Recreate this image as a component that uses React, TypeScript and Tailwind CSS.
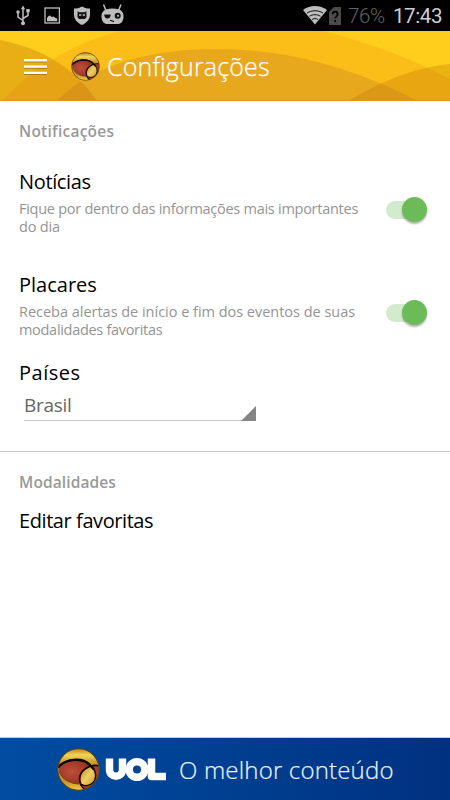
type SwitchRowProps = {
  title: string
  titleClass?: string
  children: React.ReactNode
}

function StatusBar() {
  return (
    <div className="flex h-[31px] items-center bg-black">
      {/* Left icons */}
      <svg width="150" height="31" viewBox="0 0 150 31" fill="none">
        {/* USB */}
        <g stroke="#bdbdbd" strokeWidth="1.500">
          <path d="M23 8v15M23 20.500l-5-3.500v-4.500M23 18.500l5-3v-4" />
          <circle cx="23" cy="23.200" r="2" fill="#bdbdbd" stroke="none" />
          <path d="M23 5.500l2.200 3.700h-4.400z" fill="#bdbdbd" stroke="none" />
          <circle cx="18" cy="12" r="1.700" fill="#bdbdbd" stroke="none" />
          <rect x="26.300" y="9" width="3.400" height="3.400" fill="#bdbdbd" stroke="none" />
        </g>
        {/* Picture */}
        <rect x="45" y="8" width="14.400" height="15" stroke="#bdbdbd" strokeWidth="1.300" />
        <path d="M47 21.300v-3.300l1.500-2 1.500-.5 1 1 1 .5 1.500-.5 2 1.500 1.700.5v2.800z" fill="#bdbdbd" />
        {/* Shield */}
        <path d="M82 6.500c3 1.800 5 2 8 2v6c0 5-3.500 8.500-8 10.500-4.500-2-8-5.500-8-10.500v-6c3 0 5-.2 8-2z" fill="#bdbdbd" />
        <path d="M77.700 11l1.500 1.300h5.600l1.500-1.300.3 6-1.600 2h-6l-1.600-2z" fill="#111" />
        <path d="M79 15h2.300M82.700 15H85" stroke="#bdbdbd" strokeWidth="1.500" />
        {/* Droid head */}
        <path d="M103.500 4.500l2.500 6M121 4.500l-2.500 6" stroke="#bdbdbd" strokeWidth="1.500" />
        <path d="M106 9.500c4-1.300 9-1.300 13 0 3.500 1.400 4.500 4 4.500 7 0 5-2.500 7.500-6 7.500h-10c-3.500 0-6-2.500-6-7.500 0-3 1-5.600 4.500-7z" fill="#bdbdbd" />
        <path d="M104.200 14.500h6.500c0 2.800-1.400 4-3.200 4s-3.300-1.300-3.300-4z" fill="#111" />
        <circle cx="117.700" cy="15.800" r="3" fill="#111" />
        <circle cx="118" cy="15.800" r="1.100" fill="#bdbdbd" />
        <path d="M110 20.300l4 1.300" stroke="#111" strokeWidth="1.200" />
      </svg>

      {/* Right icons */}
      <svg className="ml-[150px]" width="43" height="31" viewBox="0 0 43 31" fill="none">
        <path d="M3 10c7-5.500 17-5.500 24 0L15 24.500z" fill="#bdbdbd" />
        <path d="M7 13c5-3 11-3 16 0M9.500 16.200c3.500-2 7.500-2 11 0M12 19.500c2-1.200 4-1.200 6 0" stroke="#111" strokeWidth="1" />
        <path d="M34 7h7v18H29V12z" fill="#4b4b4b" />
        <path d="M32.700 14.300c0-3.500 5-3.500 5 0 0 2-2.500 2-2.500 4.300M35.200 20v2" stroke="#000" strokeWidth="1.700" />
      </svg>
      <span className="mt-px ml-[5px] w-[39px] font-[Roboto,sans-serif] text-[20.500px] leading-none font-light tracking-[-0.4px] whitespace-nowrap text-[#626262]">
        76%
      </span>
      <span className="mt-px ml-[6px] font-[Roboto,sans-serif] text-[20.500px] leading-none tracking-[-0.4px] text-[#cfcfcf]">
        17:43
      </span>
    </div>
  )
}

function Ball({ size, id }: { size: number; id: string }) {
  return (
    <svg width={size} height={size} viewBox="0 0 42 42" fill="none" className="shrink-0">
      <defs>
        <linearGradient id={id + "gold"} x1="0" y1="0" x2="0" y2="1">
          <stop offset="0" stopColor="#b88420" />
          <stop offset=".15" stopColor="#f2d658" />
          <stop offset=".35" stopColor="#c9952d" />
          <stop offset=".8" stopColor="#c9962f" />
          <stop offset="1" stopColor="#f4cc45" />
        </linearGradient>
        <linearGradient id={id + "patch"} x1="0" y1="0" x2="1" y2="1">
          <stop offset="0" stopColor="#b5822d" />
          <stop offset=".5" stopColor="#f0cf62" />
          <stop offset="1" stopColor="#c8932f" />
        </linearGradient>
        <radialGradient id={id + "red"} cx=".4" cy=".5" r=".7">
          <stop offset="0" stopColor="#bf4f39" />
          <stop offset="1" stopColor="#8d2a1b" />
        </radialGradient>
        <clipPath id={id + "clip"}>
          <circle cx="21" cy="21" r="20" />
        </clipPath>
      </defs>
      <circle cx="21" cy="21" r="20.300" fill={"url(#" + id + "gold)"} />
      <g clipPath={"url(#" + id + "clip)"}>
        <path d="M2 18C9 9 25 9 33 18L28 34C17 37 6 33 2 22z" fill={"url(#" + id + "red)"} />
        <path d="M42 18C31 16 22 24 23 31C23 36 26 40 30 42H42z" fill="#a83c26" />
        <path d="M33 18C39 22 39 30 35 34C32 36.500 28 37 24.500 35.500C21 30 24 20 33 18z" fill={"url(#" + id + "patch)"} />
        <path d="M1 19C8 10 25 9 32 16.500C39 22 39 30 35 34C31.500 37.500 27 37 23.500 35.500" stroke="#080503" strokeWidth="1.300" />
        <path d="M1 19C8 10 25 9 32 16.500L36 21" stroke="#080503" strokeWidth="2.200" />
        <path d="M42 17.500C31 15 21.500 23 22 31C22.500 36 25 40 30 42" stroke="#080503" strokeWidth="1.500" />
        <path d="M2 23C6 32 15 35.500 23 35" stroke="#7a4415" strokeWidth="1" />
      </g>
      <circle cx="21" cy="21" r="20.200" stroke="#594019" strokeWidth="1" />
    </svg>
  )
}

function Header() {
  return (
    <header className="relative h-[70px] overflow-hidden bg-[#ffcd1b]">
      {/* Overlapping discs */}
      <svg className="absolute inset-0" width="450" height="70" viewBox="0 0 450 70">
        <path d="M2 70C30 39 68 14 120 0H323C370 12 412 28 450 48V70z" fill="#fbbd17" />
        <path d="M57 70C95 30 160 18 215 18C290 18 355 38 418 70z" fill="#e8a81e" />
        <path d="M0 9C45 18 75 38 97 70H0z" fill="#be730f" fillOpacity=".34" />
        <path d="M348 70C380 51 415 36 450 33V70z" fill="#be7300" fillOpacity=".3" />
        <path d="M0 69.500H450" stroke="#dc990f" />
      </svg>
      <div className="relative flex h-full items-center">
        {/* Menu */}
        <svg className="ml-6 drop-shadow-[0_1px_0.5px_rgba(0,0,0,0.25)]" width="23" height="22" viewBox="0 0 23 22">
          <path d="M0 5.300H23M0 11.600H23M0 17.900H23" stroke="#fff" strokeWidth="2.400" />
        </svg>
        <div className="ml-6">
          <Ball size={29} id="top" />
        </div>
        <h1 className="ml-[7px] text-[25px] leading-none font-light tracking-[0.15px] text-white [-webkit-text-stroke:0.25px_white]">
          Configurações
        </h1>
      </div>
    </header>
  )
}

function SwitchRow({ title, titleClass = "", children }: SwitchRowProps) {
  return (
    <div className="flex h-[65px] justify-between pr-[23px] pl-[19px]">
      <div className="text-[14.500px] leading-[18px] whitespace-nowrap text-[#949494]">
        <h2 className={"h-[29px] text-[20px] leading-[22px] text-black " + titleClass}>{title}</h2>
        {children}
      </div>
      <div className="mt-[26px] flex h-[25px] w-[41px] items-center">
        <div className="flex h-[18px] w-[40px] items-center justify-end rounded-full bg-[#d3ebcd]">
          <span className="-mr-px size-[25px] shrink-0 rounded-full bg-[#6cbb59] shadow-[0_2px_2px_rgba(0,0,0,0.3)]" />
        </div>
      </div>
    </div>
  )
}

export default function App() {
  return (
    <div className="flex h-[800px] w-[450px] flex-col overflow-hidden bg-white font-['Open_Sans','Noto_Sans',sans-serif]">
      <StatusBar />
      <Header />

      <main className="flex flex-1 flex-col">
        <h3 className="mt-[20px] mb-[30px] pl-[19px] text-[15.500px] leading-[20px] font-semibold tracking-[0.25px] text-[#999]">
          Notificações
        </h3>
        <SwitchRow title="Notícias" titleClass="tracking-[-0.35px]">
          <p className="tracking-[-0.265px]">Fique por dentro das informações mais importantes</p>
          <p className="tracking-[-0.2px]">do dia</p>
        </SwitchRow>
        <div className="h-[38px]" />
        <SwitchRow title="Placares">
          <p className="tracking-[-0.02px]">Receba alertas de início e fim dos eventos de suas</p>
          <p className="tracking-[-0.3px]">modalidades favoritas</p>
        </SwitchRow>

        <h2 className="mt-[23px] pl-[19px] text-[20px] leading-[22px] tracking-[0.5px] text-black">Países</h2>
        <div className="mt-[8px] ml-6 flex h-[29px] w-[232px] items-end justify-between border-b border-[#c6c6c6]">
          <span className="mb-[4px] text-[19px] leading-[22px] tracking-[-0.3px] text-[#666]">Brasil</span>
          <svg width="15" height="15" viewBox="0 0 15 15" className="-mb-px">
            <path d="M15 0V15H0z" fill="#858585" />
          </svg>
        </div>

        <hr className="mt-[30px] border-t-[1.500px] border-[#c4c4c4]" />

        <h3 className="mt-[20px] pl-[19px] text-[15.500px] leading-[20px] font-semibold tracking-[0.1px] text-[#999]">
          Modalidades
        </h3>
        <h2 className="mt-[18px] pl-[19px] text-[20px] leading-[22px] tracking-[-0.42px] text-black">
          Editar favoritas
        </h2>
      </main>

      {/* Banner */}
      <footer className="flex h-[63px] items-center border-t border-[#c5cbd8] bg-linear-to-r from-[#014da2] to-[#003180]">
        <div className="ml-[57px]">
          <Ball size={43} id="foot" />
        </div>
        <svg
          className="ml-[5px]"
          width="62"
          height="25"
          viewBox="0 0 62 25"
          fill="none"
          stroke="#fff"
          strokeWidth="7.500"
          strokeLinejoin="round"
        >
          <path d="M4.500 1.500V12.500C4.500 21.500 17.500 21.500 17.500 12.500V1.500" />
          <circle cx="32" cy="12.500" r="7.800" />
          <path d="M46.500 1.500V19.500H61" />
        </svg>
        <span className="mt-[2px] ml-[12px] text-[24px] leading-none font-light tracking-[0.18px] whitespace-nowrap text-[#eef2f9] [-webkit-text-stroke:0.2px_#eef2f9]">
          O melhor conteúdo
        </span>
      </footer>
    </div>
  )
}
